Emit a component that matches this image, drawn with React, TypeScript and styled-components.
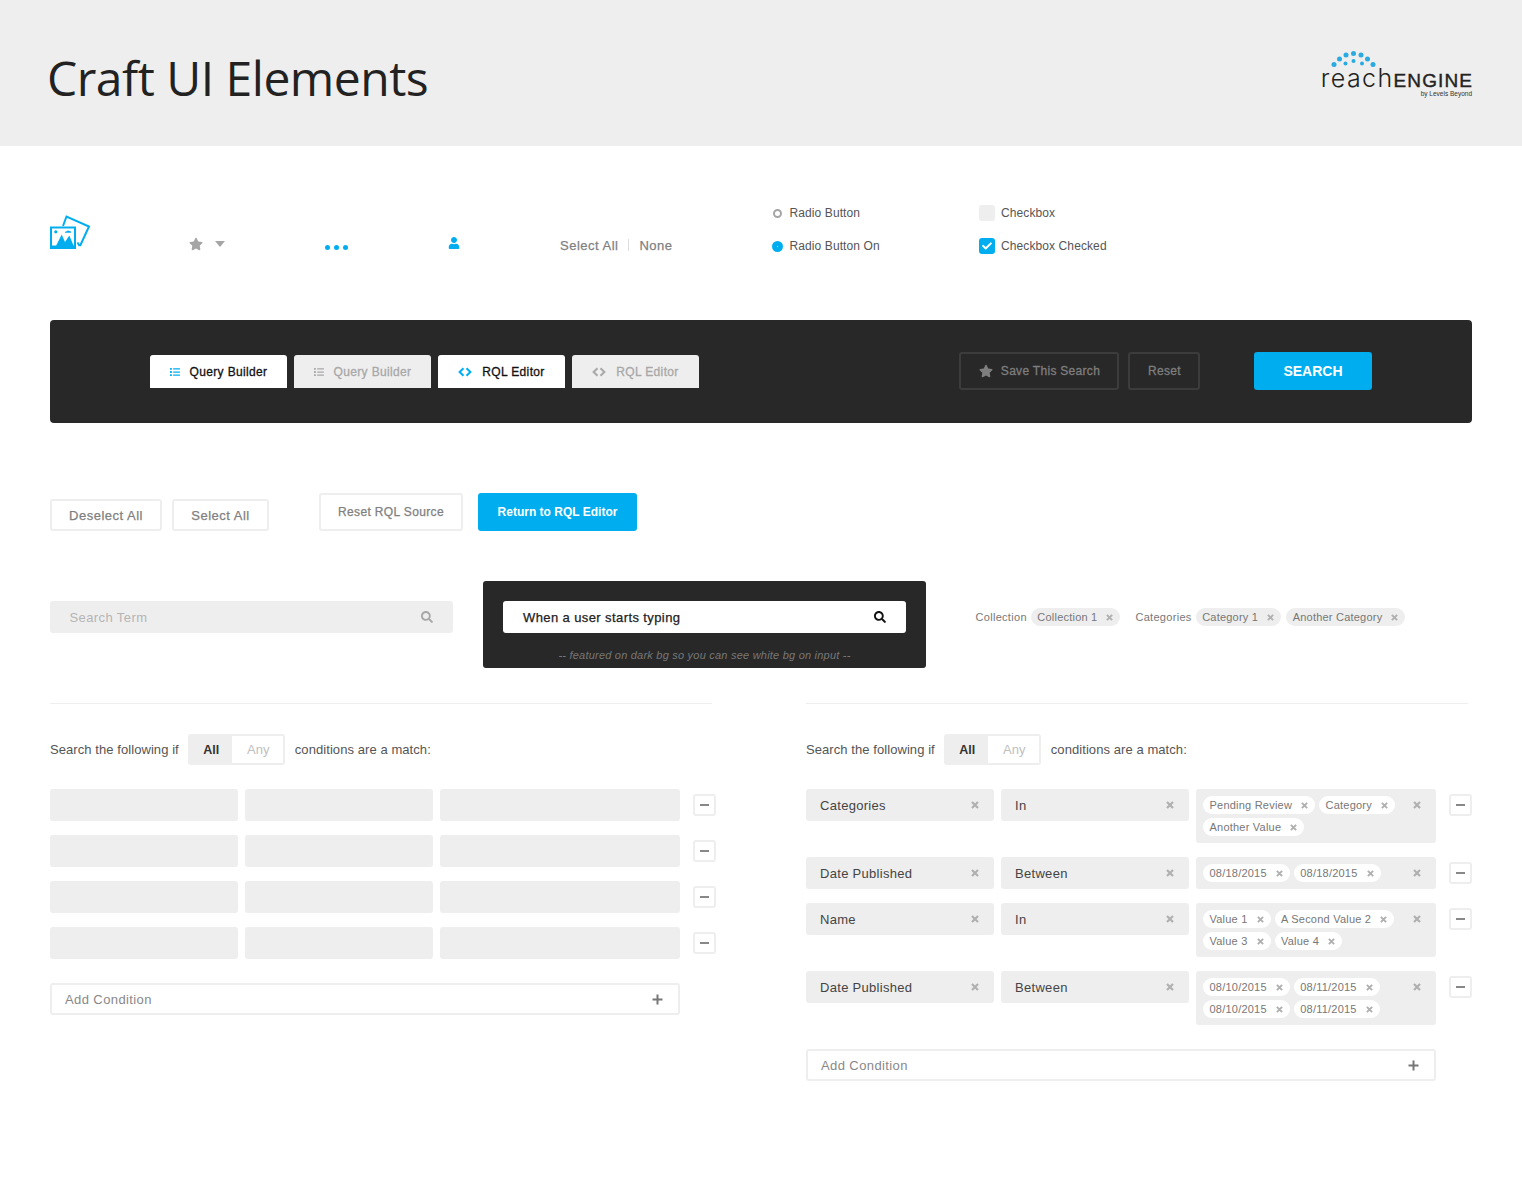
import styled, { createGlobalStyle } from "styled-components";
import { FaCheck, FaList, FaSearch, FaStar, FaUser } from "react-icons/fa";

const blue = "#00aeef";
const dark = "#282828";
const field = "#eeeeee";

const GlobalStyle = createGlobalStyle`
  html, body {
    margin: 0;
    padding: 0;
    background: #fff;
    font-family: "Liberation Sans", Arial, sans-serif;
    -webkit-font-smoothing: antialiased;
  }
  * { box-sizing: border-box; }
`;

const Page = styled.div`
  width: 1522px;
  height: 1181px;
  overflow: hidden;
`;

const Header = styled.header`
  height: 146px;
  background: ${field};
  padding: 0 49px 0 47px;
  display: flex;
  align-items: center;
  justify-content: space-between;
`;

const Title = styled.h1`
  margin: 8px 0 0;
  font-family: "Open Sans", sans-serif;
  font-weight: 400;
  font-size: 48px;
  letter-spacing: -0.5px;
  color: #222;
`;

const Logo = styled.div`
  width: 153px;
  height: 48px;
  margin-top: 3px;
  display: flex;
  flex-direction: column;
  align-items: flex-end;
`;

const LogoDots = styled.svg`
  width: 153px;
  height: 17px;
  flex: none;
`;

const LogoWord = styled.div`
  height: 21px;
  line-height: 21px;
  font-family: "Inter", sans-serif;
  font-weight: 300;
  font-size: 25px;
  letter-spacing: 1.4px;
  color: #222;
  white-space: nowrap;
`;

const LogoStrong = styled.span`
  font-family: "Liberation Sans", sans-serif;
  font-weight: 400;
  font-size: 19px;
  letter-spacing: 1.1px;
  -webkit-text-stroke: 0.4px #222;
`;

const LogoBy = styled.div`
  font-family: "Liberation Sans", sans-serif;
  font-size: 6.5px;
  line-height: 8px;
  margin: 1px 1px 0 0;
  color: #333;
`;

const Main = styled.main`
  padding: 58px 50px 0;
`;

const TopGrid = styled.section`
  display: grid;
  grid-template-columns: 139px 135px 124px 112px 212px 207px 1fr;
  align-items: end;
  height: 51px;
`;

const PictureIcon = styled.svg`
  width: 41px;
  height: 35px;
  margin-bottom: 5px;
`;

const StarMenu = styled.div`
  display: flex;
  align-items: center;
  gap: 12px;
  height: 14px;
  margin-bottom: 4px;
  color: #a5a5a5;
  font-size: 14px;
`;

const Caret = styled.span`
  width: 0;
  height: 0;
  border-left: 5px solid transparent;
  border-right: 5px solid transparent;
  border-top: 6px solid #a5a5a5;
`;

const Dots = styled.div`
  display: flex;
  gap: 4px;
  margin: 0 0 5px 1px;
`;

const Dot = styled.span`
  width: 5px;
  height: 5px;
  border-radius: 50%;
  background: ${blue};
`;

const PersonSlot = styled.div`
  height: 13px;
  margin-bottom: 5px;
  color: ${blue};
  font-size: 12px;
  line-height: 12px;
`;

const SelectLinks = styled.div`
  display: flex;
  align-items: center;
  height: 18px;
  margin-bottom: 1px;
  font-size: 13px;
  letter-spacing: 0.5px;
  color: #7f7f7f;
  -webkit-text-stroke: 0.25px #7f7f7f;
`;

const LinkDivider = styled.span`
  width: 1px;
  height: 12px;
  margin: 0 10px 0 10px;
  background: #ddd;
`;

const OptionColumn = styled.div`
  display: flex;
  flex-direction: column;
  gap: 15px;
`;

const Option = styled.label`
  display: flex;
  align-items: center;
  height: 18px;
  font-size: 12px;
  letter-spacing: 0.1px;
  color: #555;
`;

const Radio = styled.span<{ $on?: boolean }>`
  width: ${(p) => (p.$on ? 11 : 9)}px;
  height: ${(p) => (p.$on ? 11 : 9)}px;
  border-radius: 50%;
  border: ${(p) => (p.$on ? `5.5px solid ${blue}` : "2px solid #a5a5a5")};
  margin-left: ${(p) => (p.$on ? 0 : 1)}px;
  margin-right: ${(p) => (p.$on ? 6.5 : 7.5)}px;
`;

const Check = styled.span<{ $on?: boolean }>`
  width: 16px;
  height: 16px;
  margin-right: 6px;
  border-radius: 3px;
  background: ${(p) => (p.$on ? blue : field)};
  color: #fff;
  font-size: 10px;
  display: flex;
  align-items: center;
  justify-content: center;
`;

const ToolBar = styled.section`
  margin-top: 65px;
  height: 103px;
  background: ${dark};
  border-radius: 4px;
  padding: 0 100px;
  display: flex;
  align-items: center;
`;

const Tabs = styled.div`
  display: flex;
  gap: 7px;
`;

const Tab = styled.button<{ $active?: boolean; $width: number }>`
  width: ${(p) => p.$width}px;
  height: 33px;
  border: 0;
  border-radius: 3px 3px 0 0;
  padding: 0;
  background: ${(p) => (p.$active ? "#fff" : field)};
  color: ${(p) => (p.$active ? "#111" : "#a8a8a8")};
  font: 400 12px "Liberation Sans", sans-serif;
  -webkit-text-stroke: 0.3px currentColor;
  letter-spacing: 0.35px;
  display: flex;
  align-items: center;
  justify-content: center;
  gap: 10px;
  svg {
    color: ${(p) => (p.$active ? blue : "#a8a8a8")};
  }
`;

const BarActions = styled.div`
  margin: 0 0 1px auto;
  display: flex;
  align-items: center;
  gap: 9px;
`;

const GhostButton = styled.button<{ $width: number }>`
  width: ${(p) => p.$width}px;
  height: 38px;
  background: transparent;
  border: 2px solid #3c3c3c;
  border-radius: 3px;
  color: #7e7e7e;
  font: 400 12px "Liberation Sans", sans-serif;
  letter-spacing: 0.3px;
  -webkit-text-stroke: 0.3px #7e7e7e;
  display: flex;
  align-items: center;
  justify-content: center;
  gap: 8px;
  padding: 0 0 0 1px;
`;

const SearchButton = styled.button`
  width: 118px;
  height: 38px;
  margin-left: 45px;
  border: 0;
  border-radius: 3px;
  background: ${blue};
  color: #fff;
  font: 700 14px "Liberation Sans", sans-serif;
  padding: 0;
`;

const ButtonRow = styled.section`
  margin-top: 70px;
  height: 38px;
  display: flex;
  align-items: flex-end;
`;

const OutlineButton = styled.button<{ $width: number; $tall?: boolean; $gap?: number }>`
  width: ${(p) => p.$width}px;
  height: ${(p) => (p.$tall ? 38 : 32)}px;
  margin-left: ${(p) => p.$gap ?? 0}px;
  border: 2px solid ${field};
  border-radius: 3px;
  background: #fff;
  color: #808080;
  font: 400 ${(p) => (p.$tall ? 12 : 13)}px "Liberation Sans", sans-serif;
  -webkit-text-stroke: 0.25px #808080;
  letter-spacing: ${(p) => (p.$tall ? "0.35px" : "0.5px")};
  padding: 0 0 ${(p) => (p.$tall ? 1 : 0)}px;
`;

const ReturnButton = styled.button`
  width: 159px;
  height: 38px;
  margin-left: 15px;
  border: 0;
  border-radius: 3px;
  background: ${blue};
  color: #fff;
  font: 700 12px "Liberation Sans", sans-serif;
  padding: 0 0 1px;
`;

const SearchRow = styled.section`
  margin-top: 50px;
  height: 87px;
  display: flex;
  align-items: flex-start;
`;

const SearchField = styled.div<{ $typing?: boolean }>`
  width: 403px;
  height: 32px;
  flex: none;
  margin-top: ${(p) => (p.$typing ? 0 : 20)}px;
  border-radius: 3px;
  padding: 0 20px 0 ${(p) => (p.$typing ? 20 : 19.5)}px;
  background: ${(p) => (p.$typing ? "#fff" : field)};
  color: ${(p) => (p.$typing ? "#222" : "#b5b5b5")};
  font-size: 13px;
  letter-spacing: 0.4px;
  -webkit-text-stroke: ${(p) => (p.$typing ? "0.25px #222" : "0")};
  display: flex;
  align-items: center;
  justify-content: space-between;
  svg {
    color: ${(p) => (p.$typing ? "#111" : "#a8a8a8")};
    font-size: 12px;
  }
`;

const DarkPanel = styled.div`
  width: 443px;
  height: 87px;
  margin-left: 30px;
  flex: none;
  padding: 20px 20px 0;
  background: ${dark};
  border-radius: 3px;
`;

const PanelNote = styled.p`
  margin: 15px 0 0;
  text-align: center;
  font-size: 11px;
  font-style: italic;
  line-height: 14px;
  letter-spacing: 0.22px;
  color: #777;
`;

const FilterRow = styled.div`
  margin: 27px 0 0 49.5px;
  display: flex;
  align-items: center;
  font-size: 11px;
  letter-spacing: 0.3px;
  color: #777;
`;

const FilterLabel = styled.span<{ $gap?: number }>`
  margin: 0 4px 0 ${(p) => p.$gap ?? 0}px;
`;

const Chip = styled.span<{ $white?: boolean; $gap?: number }>`
  height: 18px;
  margin-left: ${(p) => p.$gap ?? 0}px;
  padding: 0 7px 0 6.5px;
  border-radius: 9px;
  background: ${(p) => (p.$white ? "#fff" : field)};
  color: #777;
  font-size: 11px;
  letter-spacing: 0.22px;
  white-space: nowrap;
  display: inline-flex;
  align-items: center;
  gap: 9px;
`;

const CrossIcon = styled.svg<{ $size?: number }>`
  width: ${(p) => p.$size ?? 7}px;
  height: ${(p) => p.$size ?? 7}px;
  flex: none;
  stroke: #b0b0b0;
  stroke-width: 2.2;
`;

const Conditions = styled.section`
  margin-top: 35px;
  display: grid;
  grid-template-columns: 756px 666px;
`;

const Panel = styled.div`
  width: 666px;
`;

const PanelHead = styled.div`
  width: 662px;
  height: 62px;
  padding-top: 30px;
  border-top: 1px solid ${field};
  display: flex;
  align-items: flex-start;
  font-size: 13px;
  letter-spacing: 0.07px;
  color: #555;
`;

const HeadText = styled.span`
  line-height: 31px;
`;

const MatchToggle = styled.div`
  width: 97px;
  height: 31px;
  margin: 0 9.5px;
  border: 2px solid ${field};
  border-radius: 3px;
  display: flex;
`;

const MatchOption = styled.span<{ $on?: boolean }>`
  flex: ${(p) => (p.$on ? "0 0 42px" : "1")};
  display: flex;
  align-items: center;
  justify-content: center;
  padding-left: ${(p) => (p.$on ? 0 : 1)}px;
  font-size: ${(p) => (p.$on ? 12.5 : 13)}px;
  background: ${(p) => (p.$on ? field : "#fff")};
  color: ${(p) => (p.$on ? "#333" : "#c0c0c0")};
  font-weight: ${(p) => (p.$on ? 700 : 400)};
`;

const Rows = styled.div`
  margin-top: 24px;
  display: flex;
  flex-direction: column;
  gap: 14px;
`;

const Row = styled.div`
  display: grid;
  grid-template-columns: 188px 188px 240px 23px;
  column-gap: 7px;
  align-items: start;
`;

const SelectBox = styled.div`
  min-height: 32px;
  padding: 0 15px 0 14px;
  border-radius: 3px;
  background: ${field};
  color: #444;
  font-size: 13px;
  letter-spacing: 0.3px;
  display: flex;
  align-items: center;
  justify-content: space-between;
`;

const ValueBox = styled.div`
  min-height: 32px;
  padding: 7px 15px 7px 7px;
  border-radius: 3px;
  background: ${field};
  display: flex;
  align-items: flex-start;
  justify-content: space-between;
`;

const ChipWrap = styled.div`
  width: 205px;
  display: flex;
  flex-wrap: wrap;
  gap: 4px;
`;

const ValueClear = styled.span`
  height: 18px;
  display: flex;
  align-items: center;
`;

const MinusButton = styled.button`
  width: 23px;
  height: 22px;
  margin: 5px 0 0 6px;
  padding: 0;
  border: 2px solid ${field};
  border-radius: 3px;
  background: #fff;
  display: flex;
  align-items: center;
  justify-content: center;
`;

const MinusBar = styled.span`
  width: 9px;
  height: 2px;
  background: #888;
`;

const AddCondition = styled.div`
  width: 630px;
  height: 32px;
  margin-top: 24px;
  padding: 0 15px 0 13px;
  border: 2px solid ${field};
  border-radius: 3px;
  color: #888;
  font-size: 13px;
  letter-spacing: 0.4px;
  display: flex;
  align-items: center;
  justify-content: space-between;
`;

const PlusIcon = styled.svg`
  width: 11px;
  height: 11px;
  stroke: #777;
  stroke-width: 2;
`;

const Cross = ({ size }: { size?: number }) => (
  <CrossIcon $size={size} viewBox="0 0 8 8">
    <path d="M1 1l6 6M7 1l-6 6" />
  </CrossIcon>
);

const CodeIcon = () => (
  <svg width="14" height="10" viewBox="0 0 14 10" fill="none" stroke="currentColor" strokeWidth="2">
    <path d="M5.5 1.2L1.6 5l3.9 3.8M8.5 1.2L12.4 5 8.5 8.8" />
  </svg>
);

const filledRows = [
  { a: "Categories", b: "In", chips: ["Pending Review", "Category", "Another Value"] },
  { a: "Date Published", b: "Between", chips: ["08/18/2015", "08/18/2015"] },
  { a: "Name", b: "In", chips: ["Value 1", "A Second Value 2", "Value 3", "Value 4"] },
  {
    a: "Date Published",
    b: "Between",
    chips: ["08/10/2015", "08/11/2015", "08/10/2015", "08/11/2015"],
  },
];

const ConditionHead = () => (
  <PanelHead>
    <HeadText>Search the following if</HeadText>
    <MatchToggle>
      <MatchOption $on>All</MatchOption>
      <MatchOption>Any</MatchOption>
    </MatchToggle>
    <HeadText>conditions are a match:</HeadText>
  </PanelHead>
);

const AddRow = () => (
  <AddCondition>
    Add Condition
    <PlusIcon viewBox="0 0 11 11">
      <path d="M5.5 0.5v10M0.5 5.5h10" />
    </PlusIcon>
  </AddCondition>
);

const App = () => {
  return (
    <Page>
      <GlobalStyle />
      <Header>
        <Title>Craft UI Elements</Title>
        <Logo>
          <LogoDots viewBox="0 0 153 17">
            <g fill="#29abe2">
              <circle cx="14" cy="13.5" r="2.5" />
              <circle cx="19.5" cy="8" r="2.5" />
              <circle cx="26" cy="4" r="2.5" />
              <circle cx="33.5" cy="2.5" r="2.5" />
              <circle cx="41" cy="4" r="2.5" />
              <circle cx="47.5" cy="8" r="2.5" />
              <circle cx="53" cy="13.5" r="2.5" />
              <circle cx="25.5" cy="12.5" r="2" />
              <circle cx="33.5" cy="10" r="2" />
              <circle cx="42" cy="12.5" r="2" />
            </g>
          </LogoDots>
          <LogoWord>
            reach<LogoStrong>ENGINE</LogoStrong>
          </LogoWord>
          <LogoBy>by Levels Beyond</LogoBy>
        </Logo>
      </Header>
      <Main>
        <TopGrid>
          <PictureIcon viewBox="0 0 41 35">
            <path d="M13 11L16.5 1.5 39 11.5 30 31M27.5 27.5l2.2 3.5" fill="none" stroke={blue} strokeWidth="2" />
            <path d="M0 11.5h26V34H0z" fill={blue} />
            <path d="M2 13.5h22v17H2z" fill="#fff" />
            <path d="M4.5 34L11.7 19.5 15 27 19.3 20.5 25 34z" fill={blue} />
            <circle cx="5.8" cy="16.8" r="1.6" fill={blue} />
            <path d="M15 17l3-1.5 3 1v1.3h-6z" fill={blue} />
          </PictureIcon>
          <StarMenu>
            <FaStar />
            <Caret />
          </StarMenu>
          <Dots>
            <Dot />
            <Dot />
            <Dot />
          </Dots>
          <PersonSlot>
            <FaUser />
          </PersonSlot>
          <SelectLinks>
            Select All
            <LinkDivider />
            None
          </SelectLinks>
          <OptionColumn>
            <Option>
              <Radio />
              Radio Button
            </Option>
            <Option>
              <Radio $on />
              Radio Button On
            </Option>
          </OptionColumn>
          <OptionColumn>
            <Option>
              <Check />
              Checkbox
            </Option>
            <Option>
              <Check $on>
                <FaCheck />
              </Check>
              Checkbox Checked
            </Option>
          </OptionColumn>
        </TopGrid>

        <ToolBar>
          <Tabs>
            <Tab $active $width={137}>
              <FaList size={10} />
              Query Builder
            </Tab>
            <Tab $width={137}>
              <FaList size={10} />
              Query Builder
            </Tab>
            <Tab $active $width={127}>
              <CodeIcon />
              RQL Editor
            </Tab>
            <Tab $width={127}>
              <CodeIcon />
              RQL Editor
            </Tab>
          </Tabs>
          <BarActions>
            <GhostButton $width={160}>
              <FaStar size={14} />
              Save This Search
            </GhostButton>
            <GhostButton $width={72}>Reset</GhostButton>
            <SearchButton>SEARCH</SearchButton>
          </BarActions>
        </ToolBar>

        <ButtonRow>
          <OutlineButton $width={112}>Deselect All</OutlineButton>
          <OutlineButton $width={97} $gap={10}>
            Select All
          </OutlineButton>
          <OutlineButton $width={144} $gap={50} $tall>
            Reset RQL Source
          </OutlineButton>
          <ReturnButton>Return to RQL Editor</ReturnButton>
        </ButtonRow>

        <SearchRow>
          <SearchField>
            Search Term
            <FaSearch />
          </SearchField>
          <DarkPanel>
            <SearchField $typing>
              When a user starts typing
              <FaSearch />
            </SearchField>
            <PanelNote>-- featured on dark bg so you can see white bg on input --</PanelNote>
          </DarkPanel>
          <FilterRow>
            <FilterLabel>Collection</FilterLabel>
            <Chip>
              Collection 1
              <Cross />
            </Chip>
            <FilterLabel $gap={15}>Categories</FilterLabel>
            <Chip>
              Category 1
              <Cross />
            </Chip>
            <Chip $gap={5}>
              Another Category
              <Cross />
            </Chip>
          </FilterRow>
        </SearchRow>

        <Conditions>
          <Panel>
            <ConditionHead />
            <Rows>
              {[0, 1, 2, 3].map((n) => (
                <Row key={n}>
                  <SelectBox />
                  <SelectBox />
                  <SelectBox />
                  <MinusButton>
                    <MinusBar />
                  </MinusButton>
                </Row>
              ))}
            </Rows>
            <AddRow />
          </Panel>
          <Panel>
            <ConditionHead />
            <Rows>
              {filledRows.map((row, index) => (
                <Row key={index}>
                  <SelectBox>
                    {row.a}
                    <Cross size={8} />
                  </SelectBox>
                  <SelectBox>
                    {row.b}
                    <Cross size={8} />
                  </SelectBox>
                  <ValueBox>
                    <ChipWrap>
                      {row.chips.map((chip, i) => (
                        <Chip $white key={i}>
                          {chip}
                          <Cross />
                        </Chip>
                      ))}
                    </ChipWrap>
                    <ValueClear>
                      <Cross size={8} />
                    </ValueClear>
                  </ValueBox>
                  <MinusButton>
                    <MinusBar />
                  </MinusButton>
                </Row>
              ))}
            </Rows>
            <AddRow />
          </Panel>
        </Conditions>
      </Main>
    </Page>
  );
};

export default App;
